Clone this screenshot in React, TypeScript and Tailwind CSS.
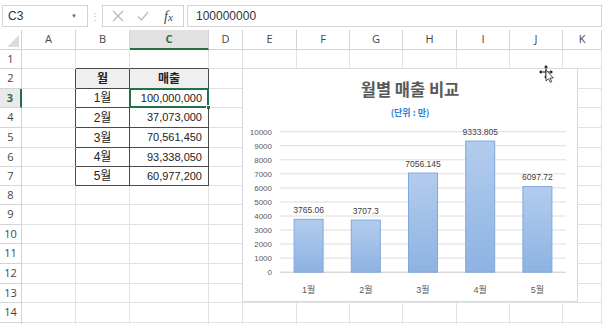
import React from 'react';

const COLS = ['A', 'B', 'C', 'D', 'E', 'F', 'G', 'H', 'I', 'J', 'K'];
const ROWS = Array.from({ length: 15 }, (_, i) => i + 1);

const DATA = [
    { month: '1월', sales: '100,000,000' },
    { month: '2월', sales: '37,073,000' },
    { month: '3월', sales: '70,561,450' },
    { month: '4월', sales: '93,338,050' },
    { month: '5월', sales: '60,977,200' },
];

const CHART = [
    { label: '1월', value: 3765.06, text: '3765.06' },
    { label: '2월', value: 3707.3, text: '3707.3' },
    { label: '3월', value: 7056.145, text: '7056.145' },
    { label: '4월', value: 9333.805, text: '9333.805' },
    { label: '5월', value: 6097.72, text: '6097.72' },
];

const TICKS = [0, 1000, 2000, 3000, 4000, 5000, 6000, 7000, 8000, 9000, 10000];

const FONT = "font-['Liberation_Sans','Noto_Sans_CJK_KR',sans-serif]";

const Toolbar: React.FC = () => (
    <div className="h-[30px] bg-white flex items-start pt-[5px] pl-[2px] gap-0">
        {/* Name box */}
        <div className="w-[86px] h-[22px] border border-[#d4d4d4] flex items-center justify-between pl-[5px] pr-[10px]">
            <span className="text-[12px] text-[#333]">C3</span>
            <span className="text-[6px] text-[#666]">▼</span>
        </div>
        <div className="w-[14px] h-[22px] flex items-center justify-center text-[10px] text-[#bbb]">⋮</div>
        {/* Formula buttons */}
        <div className="w-[82px] h-[22px] border border-[#d4d4d4] flex items-center pl-[9px] gap-[13px]">
            <svg width="12" height="12" viewBox="0 0 12 12">
                <path d="M1 1 L11 11 M11 1 L1 11" stroke="#b8b8b8" strokeWidth="1.2" fill="none" />
            </svg>
            <svg width="12" height="12" viewBox="0 0 12 12">
                <path d="M1 6.5 L4.5 10 L11 2" stroke="#b8b8b8" strokeWidth="1.2" fill="none" />
            </svg>
            <span className="text-[14px] italic font-['Liberation_Serif',serif] text-[#444] ml-[2px]">
                f<span className="text-[11px]">x</span>
            </span>
        </div>
        {/* Formula input */}
        <div className="flex-1 h-[22px] ml-[3px] border border-[#d4d4d4] flex items-center pl-[8px]">
            <span className="text-[12px] text-[#333]">100000000</span>
        </div>
    </div>
);

const Chart: React.FC = () => {
    const yOf = (v: number) => 153.2 - v * 0.01405;
    const cx = (i: number) => 37 + 57.2 * (i + 0.5);
    return (
        <div className="absolute left-[242px] top-[68px] w-[336px] h-[234px] bg-white border border-[#d9d9d9] flex flex-col items-center">
            <div className="mt-[10px] h-[20px] leading-[20px] text-[16.5px] font-bold text-[#595959] font-['Noto_Sans_CJK_KR',sans-serif]">
                월별 매출 비교
            </div>
            <div className="mt-[8px] h-[12px] leading-[12px] text-[9px] font-bold text-[#2e7fd0] font-['Noto_Sans_CJK_KR',sans-serif]">
                (단위 : 만)
            </div>
            <svg width="334" height="182" viewBox="0 0 334 182" className="block">
                <defs>
                    <linearGradient id="barGrad" x1="0" y1="0" x2="0" y2="1">
                        <stop offset="0" stopColor="#b3cced" />
                        <stop offset="1" stopColor="#8db3e2" />
                    </linearGradient>
                </defs>
                {TICKS.map((t) => (
                    <g key={t}>
                        <line
                            x1="37"
                            x2="323"
                            y1={yOf(t)}
                            y2={yOf(t)}
                            stroke={t === 0 ? '#c8c8c8' : '#dedede'}
                            strokeWidth="1"
                        />
                        <text
                            x="29"
                            y={yOf(t) + 3}
                            textAnchor="end"
                            fontSize="8"
                            fill="#595959"
                            fontFamily="Liberation Sans, sans-serif"
                        >
                            {t}
                        </text>
                    </g>
                ))}
                {CHART.map((d, i) => {
                    const top = yOf(d.value);
                    return (
                        <g key={d.label}>
                            <rect
                                x={cx(i) - 14.5}
                                y={top}
                                width="29"
                                height={yOf(0) - top}
                                fill="url(#barGrad)"
                                stroke="#7ea9dd"
                                strokeWidth="1"
                            />
                            <text
                                x={cx(i)}
                                y={top - 6.5}
                                textAnchor="middle"
                                fontSize="8.5"
                                fill="#404040"
                                fontFamily="Liberation Sans, sans-serif"
                            >
                                {d.text}
                            </text>
                            <text
                                x={cx(i)}
                                y="173.5"
                                textAnchor="middle"
                                fontSize="9"
                                fill="#595959"
                                fontFamily="Liberation Sans, Noto Sans CJK KR, sans-serif"
                            >
                                {d.label}
                            </text>
                        </g>
                    );
                })}
            </svg>
        </div>
    );
};

const MoveCursor: React.FC = () => (
    <svg className="absolute left-[538px] top-[64px]" width="18" height="20" viewBox="0 0 18 20">
        {/* four-way arrows */}
        <path d="M8 1 L10 3.5 L6 3.5 Z M8 15 L10 12.5 L6 12.5 Z M1 8 L3.5 6 L3.5 10 Z M15 8 L12.5 6 L12.5 10 Z" fill="#111" />
        <path d="M8 3 L8 13 M3 8 L13 8" stroke="#111" strokeWidth="1" />
        {/* pointer */}
        <path d="M8 6 L8 17 L10.5 14.6 L12.3 18.4 L13.8 17.7 L12 14 L15.3 14 Z" fill="#fff" stroke="#222" strokeWidth="0.8" />
    </svg>
);

export default function App() {
    const cellBorder = (r: number, c: number) => {
        // c: 0 = A ... ; table covers B2:C7
        const inTable = r >= 2 && r <= 7 && (c === 1 || c === 2);
        const right = (inTable || (c === 0 && r >= 2 && r <= 7)) ? 'border-r-[#4a4a4a]' : 'border-r-[#e1e1e1]';
        const bottom = (inTable || (r === 1 && (c === 1 || c === 2))) ? 'border-b-[#4a4a4a]' : 'border-b-[#e1e1e1]';
        return `${right} ${bottom}`;
    };

    return (
        <div className={`w-[602px] h-[324px] overflow-hidden bg-white relative ${FONT}`}>
            <Toolbar />
            <div className="grid grid-cols-[22px_54px_54px_79px_34px_54px_53px_53px_54px_53px_53px_1fr] grid-rows-[20px_19px_20px_19px_20px_20px_19px_19px_19px_20px_19px_20px_20px_19px_20px_20px]">
                {/* Header row */}
                <div className="border-r border-b border-[#d4d4d4] relative">
                    <svg className="absolute right-[2px] bottom-[2px]" width="12" height="12" viewBox="0 0 12 12">
                        <path d="M12 0 L12 12 L0 12 Z" fill="#dcdcdc" />
                    </svg>
                </div>
                {COLS.map((c) => (
                    <div
                        key={c}
                        className={
                            c === 'C'
                                ? "border-r border-b-2 border-r-[#d4d4d4] border-b-[#217346] bg-[#e1e1e1] flex items-center justify-center text-[11px] font-bold text-[#217346] font-['Open_Sans',sans-serif]"
                                : "border-r border-b border-[#d4d4d4] flex items-center justify-center text-[11px] text-[#444] font-['Open_Sans',sans-serif]"
                        }
                    >
                        {c}
                    </div>
                ))}

                {ROWS.map((r) => (
                    <React.Fragment key={r}>
                        <div
                            className={
                                r === 3
                                    ? "border-r-2 border-b border-r-[#217346] border-b-[#d4d4d4] bg-[#eaeaea] flex items-center justify-center text-[11px] font-bold text-[#217346] font-['Open_Sans',sans-serif]"
                                    : "border-r border-b border-[#d4d4d4] flex items-center justify-center text-[11px] text-[#444] font-['Open_Sans',sans-serif]"
                            }
                        >
                            {r < 15 ? r : ''}
                        </div>
                        {COLS.map((c, ci) => {
                            const base = `border-r border-b ${cellBorder(r, ci)}`;
                            if (r === 2 && c === 'B') {
                                return (
                                    <div key={c} className={`${base} bg-[#efefef] flex items-center justify-center text-[12px] font-bold text-[#222]`}>
                                        월
                                    </div>
                                );
                            }
                            if (r === 2 && c === 'C') {
                                return (
                                    <div key={c} className={`${base} bg-[#efefef] flex items-center justify-center text-[12px] font-bold text-[#222]`}>
                                        매출
                                    </div>
                                );
                            }
                            if (r >= 3 && r <= 7 && c === 'B') {
                                return (
                                    <div key={c} className={`${base} flex items-center justify-center text-[12px] text-[#222]`}>
                                        {DATA[r - 3].month}
                                    </div>
                                );
                            }
                            if (r >= 3 && r <= 7 && c === 'C') {
                                return (
                                    <div key={c} className={`${base} relative flex items-center justify-end pr-[6px] text-[11px] text-[#222]`}>
                                        {DATA[r - 3].sales}
                                        {r === 3 && (
                                            <div className="absolute -left-[1px] -top-[1px] -right-[1px] -bottom-[1px] border-2 border-[#217346]">
                                                <div className="absolute -right-[4px] -bottom-[4px] w-[5px] h-[5px] bg-[#217346] border border-white" />
                                            </div>
                                        )}
                                    </div>
                                );
                            }
                            return <div key={c} className={base} />;
                        })}
                    </React.Fragment>
                ))}
            </div>

            <Chart />
            <MoveCursor />
        </div>
    );
}
